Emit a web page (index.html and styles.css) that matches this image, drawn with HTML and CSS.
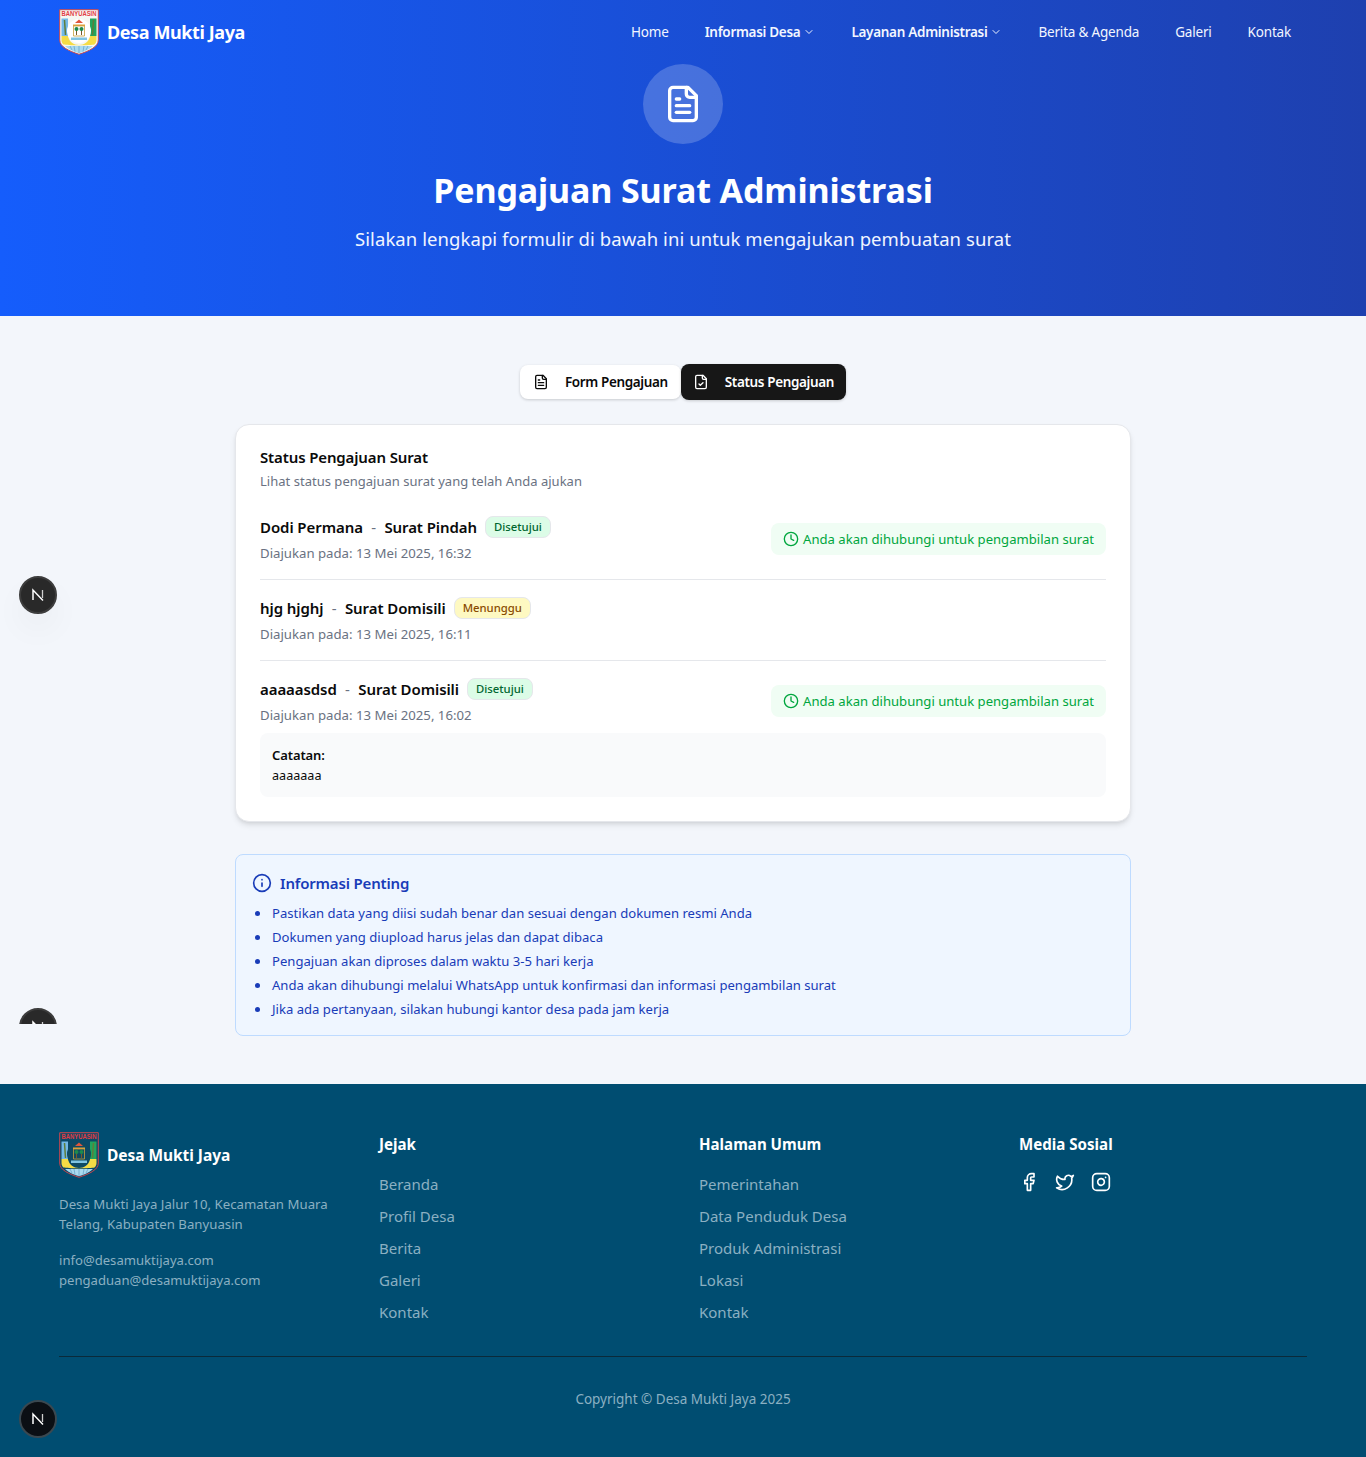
FILE: index.html
```html
<!DOCTYPE html>
<html lang="id">
<head>
<meta charset="utf-8">
<title>Pengajuan Surat Administrasi</title>
<link rel="stylesheet" href="styles.css">
</head>
<body>
<svg class="defs" width="0" height="0" aria-hidden="true">
  <defs>
    <symbol id="crest" viewBox="0 0 40 46">
      <path class="crest-shield" d="M.7.7H39.300V31C39.300 38 30 42 20 45.300 10 42 .7 38 .7 31Z"/>
      <text x="20" y="7.300" textLength="35" lengthAdjust="spacingAndGlyphs" class="crest-text">BANYUASIN</text>
      <path d="M2.500 9.500H9V27H2.500Z" fill="#73b8e6"/>
      <path d="M31 9.500H37.500V27H31Z" fill="#22a45d"/>
      <path d="M5.500 11L6.500 26M34.500 11L33.500 26" stroke="#5f7d3a" stroke-width="1.500"/>
      <path d="M2.500 27H9C10 33 15 36 20 36 25 36 30 33 31 27H37.500V31C37.500 32.500 37 34 35.500 35.500 32 36.500 8 36.500 4.500 35.500 3 34 2.500 32.500 2.500 31Z" fill="#f5dc45"/>
      <path d="M6 37H34C30 40.500 25 42.800 20 44.300 15 42.800 10 40.500 6 37Z" fill="#a9daf0"/>
      <path d="M11 37L13 41M15 37L16 42.500M20 37V44M25 37L24 42.500M29 37L27 41" stroke="#5e9fc4" stroke-width=".7"/>
      <circle class="crest-center" cx="20" cy="22" r="12"/>
      <path d="M20 10.500L24 14H16Z" fill="#e0563d"/>
      <path d="M14 15.500H26V17H14Z" fill="#e3a23d"/>
      <path d="M14.500 17H25.500V27H14.500Z" fill="none" stroke="#c5a03a" stroke-width=".8"/>
      <path d="M17.500 19.500V26M22.500 19.500V26" stroke="#7a5a2a" stroke-width="1"/>
      <circle cx="17.500" cy="20" r="2" fill="#1d8a4d"/>
      <circle cx="22.500" cy="20" r="2" fill="#1d8a4d"/>
      <path d="M12 28.500H28V31H12Z" fill="#7fc4e2"/>
    </symbol>
    <symbol id="n-mark" viewBox="0 0 20 20">
      <path d="M5 15V5L15 15.500" fill="none" stroke="#fff" stroke-width="1.500"/>
      <path d="M14.500 5V13" fill="none" stroke="#cfcfcf" stroke-width="1.300"/>
    </symbol>
  </defs>
</svg>

<header class="hero">
  <nav class="nav">
    <a class="brand" href="#">
      <svg class="crest crest-light" aria-hidden="true"><use href="#crest"/></svg>
      <span class="brand-name">Desa Mukti Jaya</span>
    </a>
    <ul class="nav-links">
      <li><a class="nav-link" href="#">Home</a></li>
      <li><a class="nav-link nav-link-strong" href="#">Informasi Desa <svg class="chev" viewBox="0 0 24 24" aria-hidden="true"><path d="m6 9 6 6 6-6"/></svg></a></li>
      <li><a class="nav-link nav-link-strong" href="#">Layanan Administrasi <svg class="chev" viewBox="0 0 24 24" aria-hidden="true"><path d="m6 9 6 6 6-6"/></svg></a></li>
      <li><a class="nav-link" href="#">Berita &amp; Agenda</a></li>
      <li><a class="nav-link" href="#">Galeri</a></li>
      <li><a class="nav-link" href="#">Kontak</a></li>
    </ul>
  </nav>
  <div class="hero-body">
    <div class="hero-icon">
      <svg viewBox="0 0 24 24" aria-hidden="true"><path d="M15 2H6a2 2 0 0 0-2 2v16a2 2 0 0 0 2 2h12a2 2 0 0 0 2-2V7Z"/><path d="M14 2v4a2 2 0 0 0 2 2h4"/><path d="M10 9H8"/><path d="M16 13H8"/><path d="M16 17H8"/></svg>
    </div>
    <h1 class="hero-title">Pengajuan Surat Administrasi</h1>
    <p class="hero-sub">Silakan lengkapi formulir di bawah ini untuk mengajukan pembuatan surat</p>
  </div>
</header>

<main class="main">
  <div class="tabs">
    <button class="tab">
      <svg class="tab-icon" viewBox="0 0 24 24" aria-hidden="true"><path d="M15 2H6a2 2 0 0 0-2 2v16a2 2 0 0 0 2 2h12a2 2 0 0 0 2-2V7Z"/><path d="M14 2v4a2 2 0 0 0 2 2h4"/><path d="M10 9H8"/><path d="M16 13H8"/><path d="M16 17H8"/></svg>
      Form Pengajuan
    </button>
    <button class="tab tab-active">
      <svg class="tab-icon" viewBox="0 0 24 24" aria-hidden="true"><path d="M15 2H6a2 2 0 0 0-2 2v16a2 2 0 0 0 2 2h12a2 2 0 0 0 2-2V7Z"/><path d="M14 2v4a2 2 0 0 0 2 2h4"/><path d="m9 15 2 2 4-4"/></svg>
      Status Pengajuan
    </button>
  </div>

  <section class="card">
    <h2 class="card-title">Status Pengajuan Surat</h2>
    <p class="card-sub">Lihat status pengajuan surat yang telah Anda ajukan</p>

    <article class="item item-first">
      <div class="item-row">
        <div>
          <div class="item-head"><strong>Dodi Permana</strong><span class="dash">-</span><strong>Surat Pindah</strong><span class="badge badge-ok">Disetujui</span></div>
          <p class="item-date">Diajukan pada: 13 Mei 2025, 16:32</p>
        </div>
        <div class="notice"><svg class="clock" viewBox="0 0 24 24" aria-hidden="true"><circle cx="12" cy="12" r="10"/><path d="M12 6v6l4 2"/></svg>Anda akan dihubungi untuk pengambilan surat</div>
      </div>
    </article>

    <article class="item">
      <div class="item-row">
        <div>
          <div class="item-head"><strong>hjg hjghj</strong><span class="dash">-</span><strong>Surat Domisili</strong><span class="badge badge-wait">Menunggu</span></div>
          <p class="item-date">Diajukan pada: 13 Mei 2025, 16:11</p>
        </div>
      </div>
    </article>

    <article class="item item-last">
      <div class="item-row">
        <div>
          <div class="item-head"><strong>aaaaasdsd</strong><span class="dash">-</span><strong>Surat Domisili</strong><span class="badge badge-ok">Disetujui</span></div>
          <p class="item-date">Diajukan pada: 13 Mei 2025, 16:02</p>
        </div>
        <div class="notice"><svg class="clock" viewBox="0 0 24 24" aria-hidden="true"><circle cx="12" cy="12" r="10"/><path d="M12 6v6l4 2"/></svg>Anda akan dihubungi untuk pengambilan surat</div>
      </div>
      <div class="note">
        <p class="note-label">Catatan:</p>
        <p class="note-text">aaaaaaa</p>
      </div>
    </article>
  </section>

  <section class="info">
    <h3 class="info-title"><svg class="info-icon" viewBox="0 0 24 24" aria-hidden="true"><circle cx="12" cy="12" r="10"/><path d="M12 16v-4"/><path d="M12 8h.01"/></svg>Informasi Penting</h3>
    <ul class="info-list">
      <li>Pastikan data yang diisi sudah benar dan sesuai dengan dokumen resmi Anda</li>
      <li>Dokumen yang diupload harus jelas dan dapat dibaca</li>
      <li>Pengajuan akan diproses dalam waktu 3-5 hari kerja</li>
      <li>Anda akan dihubungi melalui WhatsApp untuk konfirmasi dan informasi pengambilan surat</li>
      <li>Jika ada pertanyaan, silakan hubungi kantor desa pada jam kerja</li>
    </ul>
  </section>
</main>

<footer class="footer">
  <div class="footer-grid">
    <div>
      <div class="footer-brand">
        <svg class="crest crest-dark" aria-hidden="true"><use href="#crest"/></svg>
        <span class="footer-name">Desa Mukti Jaya</span>
      </div>
      <p class="footer-text footer-addr">Desa Mukti Jaya Jalur 10, Kecamatan Muara Telang, Kabupaten Banyuasin</p>
      <p class="footer-text footer-mail">info@desamuktijaya.com<br>pengaduan@desamuktijaya.com</p>
    </div>
    <div>
      <h4 class="footer-head">Jejak</h4>
      <ul class="footer-links">
        <li>Beranda</li><li>Profil Desa</li><li>Berita</li><li>Galeri</li><li>Kontak</li>
      </ul>
    </div>
    <div>
      <h4 class="footer-head">Halaman Umum</h4>
      <ul class="footer-links">
        <li>Pemerintahan</li><li>Data Penduduk Desa</li><li>Produk Administrasi</li><li>Lokasi</li><li>Kontak</li>
      </ul>
    </div>
    <div>
      <h4 class="footer-head">Media Sosial</h4>
      <div class="socials">
        <svg viewBox="0 0 24 24" aria-hidden="true"><path d="M18 2h-3a5 5 0 0 0-5 5v3H7v4h3v8h4v-8h3l1-4h-4V7a1 1 0 0 1 1-1h3z"/></svg>
        <svg viewBox="0 0 24 24" aria-hidden="true"><path d="M22 4s-.7 2.100-2 3.400c1.600 10-9.400 17.300-18 11.600 2.200.1 4.400-.6 6-2C3 15.500.5 9.600 3 5c2.200 2.600 5.600 4.100 9 4-.9-4.200 4-6.600 7-3.800 1.100 0 3-1.200 3-1.200z"/></svg>
        <svg viewBox="0 0 24 24" aria-hidden="true"><rect width="20" height="20" x="2" y="2" rx="5" ry="5"/><path d="M16 11.370A4 4 0 1 1 12.630 8 4 4 0 0 1 16 11.370z"/><line x1="17.500" x2="17.510" y1="6.500" y2="6.500"/></svg>
      </div>
    </div>
  </div>
  <div class="footer-bottom">Copyright © Desa Mukti Jaya 2025</div>
</footer>

<div class="dev dev-1"><svg aria-hidden="true"><use href="#n-mark"/></svg></div>
<div class="dev-clip"><div class="dev dev-2"><svg aria-hidden="true"><use href="#n-mark"/></svg></div></div>
<div class="dev dev-3"><svg aria-hidden="true"><use href="#n-mark"/></svg></div>
</body>
</html>
```

FILE: styles.css
```css
* { box-sizing: border-box; }
html, body { margin: 0; padding: 0; }
body {
  position: relative;
  font-family: "Noto Sans", "Open Sans", sans-serif;
  background: #f3f6fb;
  color: #0a0a0a;
  font-size: 14px;
  line-height: 20px;
}
h1, h2, h3, h4, p, ul { margin: 0; padding: 0; }
ul { list-style: none; }
a { color: inherit; text-decoration: none; }
.defs { position: absolute; }
.crest-text { font: 700 7px "Liberation Sans", sans-serif; fill: #e23b43; text-anchor: middle; }
.crest-shield { fill: var(--crest-bg); stroke: #c8474f; stroke-width: 1; }
.crest-center { fill: var(--crest-center); }
.crest-light { --crest-bg: #f6f7f3; --crest-center: #ffffff; }
.crest-dark { --crest-bg: #0b4a68; --crest-center: #0f4a62; }

.hero {
  height: 316px;
  background: linear-gradient(to right, #155dfc 0%, #1e40af 100%);
  color: #fff;
}
.nav {
  width: 1248px;
  height: 64px;
  margin: 0 auto;
  padding-top: 9px;
  display: flex;
  justify-content: space-between;
  align-items: flex-start;
}
.brand { display: flex; align-items: center; gap: 8px; }
.crest { display: block; width: 40px; height: 46px; }
.brand-name { font-size: 18px; font-weight: 700; line-height: 46px; letter-spacing: -.4px; }
.nav-links { display: flex; align-items: center; padding: 13px 16px 0 0; gap: 36px; font-size: 13.500px; }
.nav-link { display: flex; align-items: center; gap: 3px; height: 20px; color: #f2f6ff; letter-spacing: -.19px; }
.nav-link-strong { font-weight: 600; letter-spacing: -.3px; }
.chev { width: 12px; height: 12px; fill: none; stroke: #eef3ff; stroke-width: 2; stroke-linecap: round; stroke-linejoin: round; }
.hero-body { display: flex; flex-direction: column; align-items: center; }
.hero-icon {
  width: 80px;
  height: 80px;
  border-radius: 50%;
  background: rgba(255, 255, 255, .2);
  display: flex;
  align-items: center;
  justify-content: center;
}
.hero-icon svg { width: 40px; height: 40px; fill: none; stroke: #fff; stroke-width: 2; stroke-linecap: round; stroke-linejoin: round; }
.hero-title { margin-top: 23px; font-size: 34px; line-height: 46px; font-weight: 700; letter-spacing: -.12px; }
.hero-sub { margin-top: 12px; font-size: 18.500px; line-height: 28px; color: #f0f5ff; letter-spacing: .07px; }

.main { padding: 48px 0; display: flex; flex-direction: column; align-items: center; }
.tabs { display: flex; align-items: center; height: 36px; }
.tab {
  display: flex;
  align-items: center;
  height: 34px;
  padding: 0 13px;
  gap: 16px;
  font: 600 13.500px/20px "Noto Sans", sans-serif;
  letter-spacing: -.37px;
  color: #0a0a0a;
  background: #fff;
  border: 0;
  border-radius: 8px;
  box-shadow: 0 1px 3px rgba(0, 0, 0, .18);
}
.tab-active { height: 36px; padding: 0 12px; background: #171717; color: #fff; }
.tab-icon { width: 16px; height: 16px; fill: none; stroke: currentColor; stroke-width: 2; stroke-linecap: round; stroke-linejoin: round; }

.card {
  width: 896px;
  margin-top: 24px;
  padding: 24px;
  background: #fff;
  border: 1px solid #e5e7eb;
  border-radius: 14px;
  box-shadow: 0 4px 6px -1px rgba(0, 0, 0, .1), 0 2px 4px -2px rgba(0, 0, 0, .1);
}
.card-title { font-size: 15px; line-height: 16px; font-weight: 600; letter-spacing: -.13px; }
.card-sub { margin-top: 6px; font-size: 13px; line-height: 20px; color: #6a7282; letter-spacing: .02px; }
.item { padding-top: 16px; padding-bottom: 16px; border-bottom: 1px solid #e5e7eb; }
.item-first { padding-top: 24px; }
.item-last { border-bottom: 0; padding-bottom: 0; }
.item-row { display: flex; justify-content: space-between; align-items: center; }
.item-head { display: flex; align-items: center; height: 24px; font-size: 15px; }
.item-head strong { font-weight: 600; letter-spacing: -.08px; }
.dash { margin: 0 8.350px; color: #6a7282; }
.badge {
  margin-left: 8px;
  height: 22px;
  padding: 0 8px;
  border-radius: 8px;
  border: 1px solid #e5e7eb;
  font-size: 11.300px;
  font-weight: 500;
  line-height: 20px;
}
.badge-ok { background: #dcfce7; color: #016630; }
.badge-wait { background: #fef9c2; color: #894b00; }
.item-date { margin-top: 4px; font-size: 13.200px; line-height: 20px; color: #6a7282; }
.notice {
  display: flex;
  align-items: center;
  gap: 4px;
  height: 32px;
  padding: 0 12px;
  border-radius: 8px;
  background: #f0fdf4;
  color: #00a63e;
  font-size: 13.100px;
}
.clock { width: 16px; height: 16px; fill: none; stroke: currentColor; stroke-width: 2; stroke-linecap: round; stroke-linejoin: round; }
.note { margin-top: 8px; height: 64px; padding: 12px; border-radius: 8px; background: #f9fafb; font-size: 13px; }
.note-label { font-weight: 600; line-height: 20px; letter-spacing: -.1px; }
.note-text { line-height: 22px; font-size: 12.600px; }

.info {
  width: 896px;
  height: 182px;
  margin-top: 32px;
  padding: 16px;
  background: #eff6ff;
  border: 1px solid #bedbff;
  border-radius: 8px;
  color: #193cb8;
}
.info-title { display: flex; align-items: center; gap: 8px; font-size: 15px; line-height: 24px; font-weight: 600; letter-spacing: -.17px; }
.info-icon { width: 20px; height: 20px; fill: none; stroke: currentColor; stroke-width: 2; stroke-linecap: round; stroke-linejoin: round; }
.info-list { margin-top: 6px; font-size: 13.100px; }
.info-list li { position: relative; height: 24px; line-height: 24px; padding-left: 20px; }
.info-list li::before {
  content: "";
  position: absolute;
  left: 3px;
  top: 9.500px;
  width: 5px;
  height: 5px;
  border-radius: 50%;
  background: #193cb8;
}

.footer { height: 373px; background: #004d71; color: #fff; padding-top: 48px; }
.footer-grid {
  width: 1248px;
  height: 225px;
  margin: 0 auto;
  display: grid;
  grid-template-columns: repeat(4, 288px);
  gap: 32px;
  border-bottom: 1px solid #0a2a3a;
}
.footer-brand { display: flex; align-items: center; gap: 8px; }
.footer-name { font-size: 15.500px; font-weight: 700; letter-spacing: -.05px; }
.footer-text { font-size: 13.200px; line-height: 20px; color: #8bb0c2; }
.footer-addr { margin-top: 16px; margin-bottom: 16px; letter-spacing: .02px; }
.footer-mail { font-size: 13.100px; }
.footer-head { margin-top: 0; font-size: 15.100px; line-height: 24px; font-weight: 700; }
.footer-links { margin-top: 12px; color: #8bb0c2; font-size: 15px; }
.footer-links li { height: 32px; line-height: 32px; }
.socials { display: flex; gap: 16px; margin-top: 16px; }
.socials svg { width: 20px; height: 20px; fill: none; stroke: #fff; stroke-width: 2; stroke-linecap: round; stroke-linejoin: round; }
.footer-bottom { margin-top: 32px; text-align: center; font-size: 13.500px; line-height: 20px; color: #8bb0c2; }

.dev {
  position: absolute;
  left: 19px;
  width: 38px;
  height: 38px;
  border-radius: 50%;
  background: #292929;
  border: 2px solid #3d3d3d;
  display: flex;
  align-items: center;
  justify-content: center;
}
.dev svg { width: 20px; height: 20px; }
.dev-1 { top: 576px; box-shadow: 0 16px 32px rgba(0, 0, 0, .04); }
.dev-clip { position: absolute; left: 0; top: 1000px; width: 80px; height: 24px; overflow: hidden; }
.dev-2 { top: 8px; }
.dev-3 { top: 1400px; background: #0b0f14; border-color: #3a4850; }
```
